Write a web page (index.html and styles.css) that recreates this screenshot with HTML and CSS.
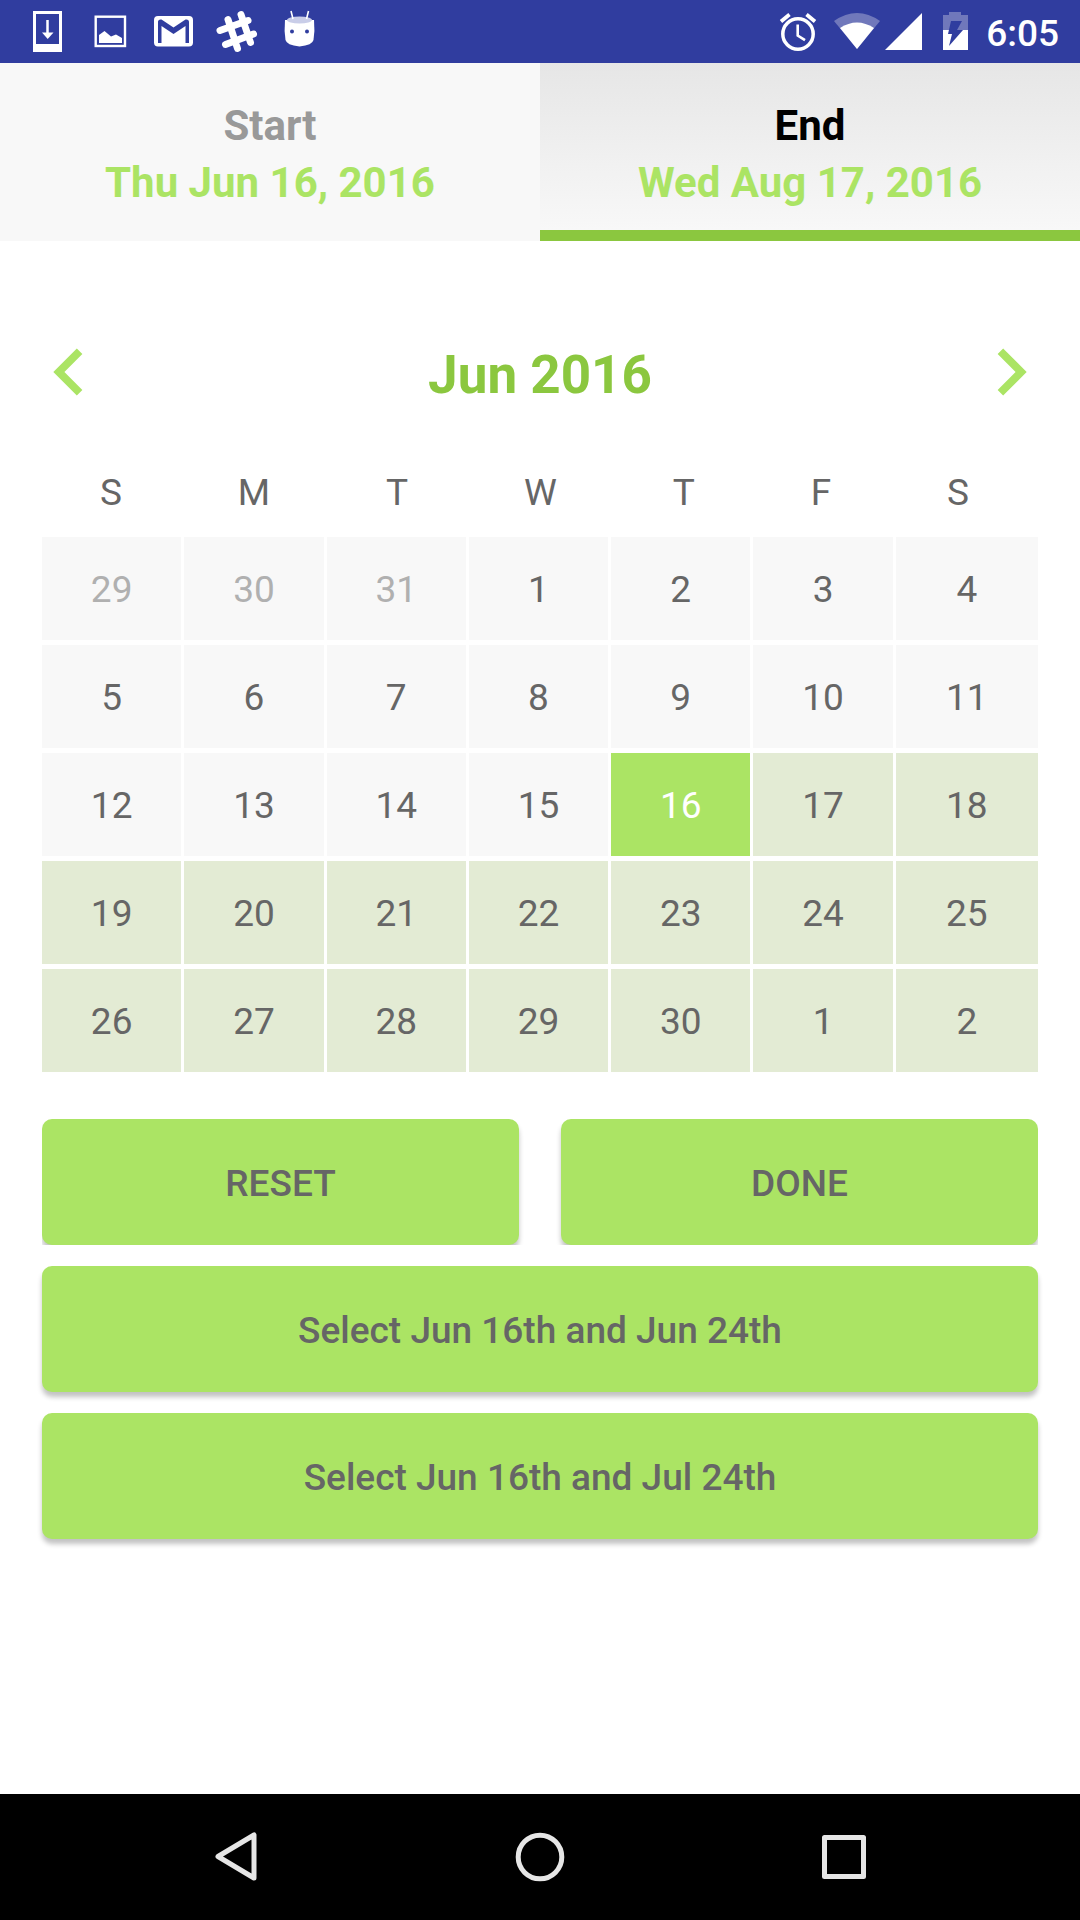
FILE: index.html
```html
<!DOCTYPE html>
<html lang="en">
<head>
<meta charset="utf-8">
<meta name="viewport" content="width=device-width, initial-scale=1">
<title>Select dates</title>
<link rel="stylesheet" href="styles.css">
</head>
<body>
<div class="screen">
  <header class="status">
    <div class="status-group">
      <svg class="notice" viewBox="0 0 63 63" aria-hidden="true"><path fill="#fff" fill-rule="evenodd" d="M33 11h29v41H33zM36 14v30h23V14z" transform="translate(-16 0)"/><path d="M31.500 20v15" stroke="#fff" stroke-width="2.500"/><path fill="#fff" d="M26 32.500h11.500L31.700 39z"/></svg>
      <svg class="notice" viewBox="0 0 63 63" aria-hidden="true"><rect x="16.700" y="16.700" width="29.300" height="29.300" fill="none" stroke="#fff" stroke-width="2.400"/><path fill="#fff" d="M20 43v-8l5.500-4 6.500 5.500 5-2 6 3.500v5z"/></svg>
      <svg class="notice" viewBox="0 0 63 63" aria-hidden="true"><path fill="#fff" fill-rule="evenodd" d="M16 16h31a4 4 0 0 1 4 4v22.500a4 4 0 0 1-4 4H16a4 4 0 0 1-4-4V20a4 4 0 0 1 4-4zM16 43h3.500V26l12 8 12-8v17H47V22q0-3-3.500-2.500l-12 8-12-8Q16 19 16 22z"/></svg>
      <svg class="notice" viewBox="0 0 63 63" aria-hidden="true"><g stroke="#fff" stroke-width="7" stroke-linecap="round"><path d="M23 19.500l9.500 29M36 14.500l9.500 28M15 30.500l28-10M20.500 44.500l28-10.500"/></g></svg>
      <svg class="notice" viewBox="0 0 63 63" aria-hidden="true"><path fill="#fff" d="M17 20q-1 11 .5 20 1 5 14 6.500 13-1.500 14-6.500 1.500-9 .5-20z"/><ellipse cx="31.500" cy="20" rx="12.500" ry="3.500" fill="#c9cde8"/><path d="M23 11l2 8M40.500 11l-2 8" stroke="#fff" stroke-width="1.600"/><circle cx="24" cy="31.500" r="2" fill="#303d9f"/><circle cx="39" cy="31.500" r="2" fill="#303d9f"/></svg>
    </div>
    <div class="status-group">
      <svg class="alarm" viewBox="0 0 40 63" aria-hidden="true"><circle cx="20" cy="34" r="15.200" fill="none" stroke="#fff" stroke-width="3.500"/><path d="M19.700 24.500v11l7.300 4.700" fill="none" stroke="#fff" stroke-width="2.600"/><path d="M3 21.500l8.500-7M28.500 14.500l8.500 7" stroke="#fff" stroke-width="3.800"/></svg>
      <svg class="wifi" viewBox="0 0 46 63" aria-hidden="true"><path fill="#7078bb" d="M0 21Q23 5 46 21L23 49z"/><path fill="#fff" d="M6 28Q23 17 40 28L23 49z"/></svg>
      <svg class="signal" viewBox="0 0 37 63" aria-hidden="true"><path fill="#fff" d="M0 50L37 13v37z"/></svg>
      <svg class="battery" viewBox="0 0 25 63" aria-hidden="true"><path fill="#7078bb" d="M0 15h6v-3h12v3h7v16H0z"/><path fill="#fff" d="M0 30h25v20H0z"/><path fill="#303d9f" d="M8 21h11l-5 9h6L6 46l3-12H5z"/></svg>
      <time class="clock">6:05</time>
    </div>
  </header>

  <div class="tabs" role="tablist">
    <button class="tab" type="button" role="tab" aria-selected="false"><span class="tab-label">Start</span><span class="tab-date">Thu Jun 16, 2016</span></button>
    <button class="tab active" type="button" role="tab" aria-selected="true"><span class="tab-label">End</span><span class="tab-date">Wed Aug 17, 2016</span></button>
  </div>

  <main>
    <div class="month">
      <button class="arrow" type="button" aria-label="Previous month"><svg viewBox="0 0 24 24" aria-hidden="true"><path d="M15.410 7.410L14 6l-6 6 6 6 1.410-1.410L10.830 12z"/></svg></button>
      <h1 class="month-name">Jun 2016</h1>
      <button class="arrow" type="button" aria-label="Next month"><svg viewBox="0 0 24 24" aria-hidden="true"><path d="M10 6L8.590 7.410 13.170 12l-4.580 4.590L10 18l6-6z"/></svg></button>
    </div>

    <div class="content">
      <table class="calendar">
        <thead>
          <tr><th>S</th><th>M</th><th>T</th><th>W</th><th>T</th><th>F</th><th>S</th></tr>
        </thead>
        <tbody>
          <tr><td><button class="day other" type="button">29</button></td><td><button class="day other" type="button">30</button></td><td><button class="day other" type="button">31</button></td><td><button class="day" type="button">1</button></td><td><button class="day" type="button">2</button></td><td><button class="day" type="button">3</button></td><td><button class="day" type="button">4</button></td></tr>
          <tr><td><button class="day" type="button">5</button></td><td><button class="day" type="button">6</button></td><td><button class="day" type="button">7</button></td><td><button class="day" type="button">8</button></td><td><button class="day" type="button">9</button></td><td><button class="day" type="button">10</button></td><td><button class="day" type="button">11</button></td></tr>
          <tr><td><button class="day" type="button">12</button></td><td><button class="day" type="button">13</button></td><td><button class="day" type="button">14</button></td><td><button class="day" type="button">15</button></td><td><button class="day selected" type="button">16</button></td><td><button class="day range" type="button">17</button></td><td><button class="day range" type="button">18</button></td></tr>
          <tr><td><button class="day range" type="button">19</button></td><td><button class="day range" type="button">20</button></td><td><button class="day range" type="button">21</button></td><td><button class="day range" type="button">22</button></td><td><button class="day range" type="button">23</button></td><td><button class="day range" type="button">24</button></td><td><button class="day range" type="button">25</button></td></tr>
          <tr><td><button class="day range" type="button">26</button></td><td><button class="day range" type="button">27</button></td><td><button class="day range" type="button">28</button></td><td><button class="day range" type="button">29</button></td><td><button class="day range" type="button">30</button></td><td><button class="day range" type="button">1</button></td><td><button class="day range" type="button">2</button></td></tr>
        </tbody>
      </table>

      <div class="actions">
        <div class="action-pair">
          <button class="action" type="button">RESET</button>
          <button class="action" type="button">DONE</button>
        </div>
        <button class="action" type="button">Select Jun 16th and Jun 24th</button>
        <button class="action" type="button">Select Jun 16th and Jul 24th</button>
      </div>
    </div>
  </main>

  <nav class="system-nav" aria-label="System">
    <button class="nav-button" type="button" aria-label="Back"><svg viewBox="0 0 126 126" aria-hidden="true"><path d="M81 41v43L45 62.500z"/></svg></button>
    <button class="nav-button" type="button" aria-label="Home"><svg viewBox="0 0 126 126" aria-hidden="true"><circle cx="63" cy="63" r="21.800"/></svg></button>
    <button class="nav-button" type="button" aria-label="Recent apps"><svg viewBox="0 0 126 126" aria-hidden="true"><rect x="43.500" y="43.500" width="39" height="39"/></svg></button>
  </nav>
</div>
</body>
</html>
```
FILE: styles.css
```css
* {
  box-sizing: border-box;
}

body {
  margin: 0;
  background: #fff;
  color: #666;
  font-family: Roboto, "Liberation Sans", sans-serif;
}

button {
  margin: 0;
  padding: 0;
  border: 0;
  background: none;
  color: inherit;
  font: inherit;
  cursor: pointer;
}

svg {
  display: block;
}

.screen {
  display: flex;
  flex-direction: column;
  min-height: 100vh;
}

/* Status bar */
.status {
  display: flex;
  justify-content: space-between;
  height: 63px;
  padding: 0 21px 0 16px;
  background: #303d9f;
  color: #fff;
}

.status-group {
  display: flex;
}

.status-group svg {
  height: 63px;
}

.notice {
  width: 63px;
}

.alarm {
  width: 40px;
  margin-right: 16px;
}

.wifi {
  width: 46px;
  margin-right: 5px;
}

.signal {
  width: 37px;
  margin-right: 21px;
}

.battery {
  width: 25px;
  margin-right: 18px;
}

.clock {
  padding-top: 2px;
  font-size: 37px;
  font-weight: 500;
  line-height: 63px;
}

/* Start and end tabs */
.tabs {
  display: grid;
  grid-template-columns: 1fr 1fr;
}

.tab {
  display: flex;
  flex-direction: column;
  align-items: center;
  padding: 34px 0 19px;
  border-bottom: 11px solid transparent;
  background: #f8f8f8;
  color: #999;
  font-size: 42px;
  font-weight: 700;
  line-height: 57px;
}

.tab.active {
  border-bottom-color: #8bc73f;
  background: linear-gradient(#e6e6e6, #f8f8f8);
  color: #000;
}

.tab-date {
  color: #abe464;
}

/* Month header */
.month {
  display: flex;
  align-items: center;
  justify-content: space-between;
  margin-top: 84px;
  padding: 0 22px;
}

.arrow svg {
  width: 94px;
  height: 94px;
  fill: #abe464;
}

.month-name {
  margin: 0;
  padding-top: 5px;
  color: #8bc73f;
  font-size: 53px;
  font-weight: 700;
  line-height: 62px;
}

.content {
  padding: 0 42px 42px;
}

/* Calendar */
.calendar,
.calendar thead,
.calendar tbody {
  display: block;
}

.calendar {
  font-size: 37px;
  line-height: 47px;
}

.calendar tr {
  display: flex;
}

.calendar thead tr {
  padding: 50px 11px 21px 0;
}

.calendar th {
  flex: 1 1 auto;
  padding: 0;
  font-weight: 400;
}

.calendar td {
  flex: none;
  width: calc(100% / 7);
  padding: 0 3px 5px 0;
}

.calendar td:last-child {
  padding-right: 0;
}

.day {
  display: block;
  width: 100%;
  height: 103px;
  padding-top: 2px;
  background: #f8f8f8;
}

.day.other {
  color: #b0b0b0;
}

.day.range {
  background: #e3ebd4;
}

.day.selected {
  background: #abe464;
  color: #fff;
}

/* Actions */
.actions {
  display: flex;
  flex-direction: column;
  gap: 21px;
  margin-top: 42px;
}

.action-pair {
  display: grid;
  grid-template-columns: 1fr 1fr;
  gap: 42px;
  overflow: hidden;
}

.action {
  height: 126px;
  padding-top: 2px;
  border-radius: 10px;
  background: #abe464;
  box-shadow: 0 5px 5px rgba(0, 0, 0, 0.24);
  font-size: 37px;
  font-weight: 500;
}

/* System navigation */
.system-nav {
  display: flex;
  justify-content: center;
  gap: 178px;
  margin-top: auto;
  background: #000;
}

.nav-button svg {
  width: 126px;
  height: 126px;
  fill: none;
  stroke: #e6e6e6;
  stroke-width: 5;
  stroke-linejoin: round;
}
```
